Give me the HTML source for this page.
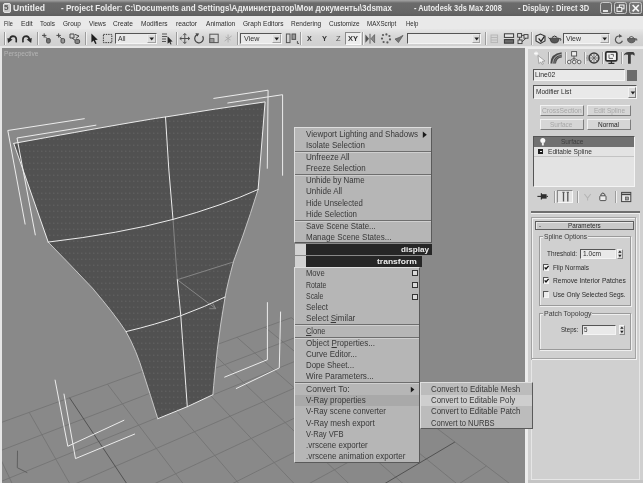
<!DOCTYPE html>
<html><head><meta charset="utf-8"><title>Untitled - Autodesk 3ds Max 2008</title><style>
html,body{margin:0;padding:0}
html{background:#d0d0d0}
body{filter:grayscale(1) blur(0.4px)}
body{width:643px;height:483px;overflow:hidden;position:relative;background:#d0d0d0;font-family:"Liberation Sans",sans-serif}
.a{position:absolute}
.t{position:absolute;white-space:nowrap;transform-origin:0 50%;display:inline-block}
.fld{position:absolute;background:#e9e9e9;border-top:1px solid #555;border-left:1px solid #555;border-right:1px solid #f4f4f4;border-bottom:1px solid #f4f4f4;box-sizing:border-box}
.btn{position:absolute;background:#d6d6d6;border-top:1px solid #f2f2f2;border-left:1px solid #f2f2f2;border-right:1px solid #7d7d7d;border-bottom:1px solid #7d7d7d;box-sizing:border-box}
.grp{position:absolute;border:1px solid #9a9a9a;box-shadow:1px 1px 0 #efefef, inset 1px 1px 0 #efefef;box-sizing:border-box}
.sep{position:absolute;width:1px;background:#9c9c9c;box-shadow:1px 0 0 #f0f0f0}
.msep{position:absolute;height:1px;background:#6e6e6e;box-shadow:0 1px 0 #cfcfcf}
</style></head><body>
<div class="a" style="left:0px;top:0px;width:643px;height:16.3px;background:linear-gradient(#a4a4a4 0,#8c8c8e 1.4px,#6b6b6d 3px,#656567 13px,#5c5c5e 16.3px)"></div>
<div class="a" style="left:2.5px;top:3px;width:8.0px;height:10px;background:#c9c9c9;border-radius:2px;border:1px solid #e6e6e6;box-sizing:border-box"></div>
<div class="a" style="left:599.6px;top:2px;width:12.4px;height:12.4px;background:#69696b;border:1px solid #c9c9c9;border-radius:2.5px;box-sizing:border-box"></div>
<div class="a" style="left:614.2px;top:2px;width:12.4px;height:12.4px;background:#69696b;border:1px solid #c9c9c9;border-radius:2.5px;box-sizing:border-box"></div>
<div class="a" style="left:629px;top:2px;width:13.4px;height:12.4px;background:#767678;border:1px solid #c9c9c9;border-radius:2.5px;box-sizing:border-box"></div>
<div class="a" style="left:0px;top:16.3px;width:643px;height:12.7px;background:#e9e9e9"></div>
<div class="a" style="left:0px;top:29px;width:643px;height:18.3px;background:linear-gradient(#e6e6e6,#d6d6d6 40%,#cfcfcf)"></div>
<div class="a" style="left:0px;top:46.2px;width:643px;height:1.5px;background:#e6e6e6"></div>
<div class="a" style="left:0px;top:47.7px;width:643px;height:0.7px;background:#a8a8a8"></div>
<div class="a" style="left:0px;top:48px;width:1.7px;height:435px;background:#e6e6e6"></div>
<svg class="a" style="left:1.7px;top:48.3px" width="523.6999999999999" height="434.7" viewBox="1.7 48.3 523.6999999999999 434.7">
<rect x="0" y="40" width="530" height="450" fill="#89898a"/>
<path d="M291.0,318.0 L754.5,670.1 M291.0,318.0 L-286.7,526.7 M264.6,327.5 L729.0,706.3 M309.7,332.2 L-287.9,561.5 M236.7,337.6 L700.7,746.5 M329.6,347.4 L-289.2,600.2 M207.1,348.3 L669.2,791.3 M351.0,363.6 L-290.7,643.8 M175.8,359.6 L633.8,841.7 M374.0,381.1 L-292.3,693.1 M142.5,371.7 L593.7,898.6 M398.8,399.9 L-294.2,749.3 M107.1,384.4 L548.1,963.6 M425.6,420.2 L-296.4,814.1 M28.9,412.7 L434.3,1125.3 M486.2,466.3 L-302.0,978.4 M-14.3,428.3 L362.2,1227.7 M520.6,492.5 L-305.6,1084.8 M-60.8,445.1 L276.1,1350.2 M558.4,521.2 L-309.9,1214.3 M-110.8,463.2 L171.4,1499.1 M600.0,552.8 L-315.4,1375.5 M-164.7,482.7 L41.2,1684.2 M646.0,587.7 L-322.3,1581.5 M-223.2,503.8 L-124.9,1920.3 M697.2,626.6 L-331.5,1854.2 M-286.7,526.7 L-344.3,2232.1 M754.5,670.1 L-344.3,2232.1" stroke="#747476" stroke-width="0.9" fill="none"/><path d="M69.3,398.1 L495.5,1038.3 M454.6,442.3 L-299.0,889.5" stroke="#515153" stroke-width="1" fill="none"/>
<defs><pattern id="dots" width="4" height="6" patternUnits="userSpaceOnUse"><rect width="4" height="6" fill="#515153"/><rect x="1" y="1" width="1" height="1" fill="#6c6c6e"/></pattern></defs>
<path d="M13.5,143.7 Q150,119 165.2,117.3 Q215,109 264.8,102.2 L257.8,189.8 Q250,215 242.6,236 Q236,254 233.3,261.6 Q227,285 224.8,297.3 Q220,325 217,350 Q214,378 212.6,395 L187,407 L157.5,419 Q150,395 143.5,375 Q136,350 125.7,331.9 Q114,314 92.1,288.4 Q70,265 47.9,242.4 Z" fill="url(#dots)"/>
<path d="M172.7,219.7 L177,280 M177,280 L234,262 M177,280 L215.5,309 M209,309 L215.5,309 L212,303" stroke="#858b93" stroke-width="0.9" fill="none"/>
<path d="M13.5,143.7 Q150,119 165.2,117.3 Q215,109 264.8,102.2 L257.8,189.8" stroke="#ececec" stroke-width="1" fill="none" stroke-linecap="round" stroke-linejoin="round"/>
<path d="M13.5,143.7 L47.9,242.4" stroke="#ececec" stroke-width="1" fill="none" stroke-linecap="round" stroke-linejoin="round"/>
<path d="M47.9,242.4 Q70,265 92.1,288.4 Q114,314 125.7,331.9 Q136,350 143.5,375 Q150,395 157.5,419" stroke="#cfcfcf" stroke-width="0.9" fill="none"/>
<path d="M157.5,419 L187,407 L212.6,395" stroke="#ececec" stroke-width="1" fill="none" stroke-linecap="round" stroke-linejoin="round"/>
<path d="M257.8,189.8 Q250,215 242.6,236 Q236,254 233.3,261.6 Q227,285 224.8,297.3 Q220,325 217,350 Q214,378 212.6,395" stroke="#cfcfcf" stroke-width="0.9" fill="none"/>
<path d="M47.9,242.4 Q120,234 172.7,219.7 Q222,206 257.8,189.8" stroke="#ececec" stroke-width="1" fill="none" stroke-linecap="round" stroke-linejoin="round"/>
<path d="M125.7,331.9 Q155,325 180.5,316 Q205,307 224.8,297.3" stroke="#ececec" stroke-width="1" fill="none" stroke-linecap="round" stroke-linejoin="round"/>
<path d="M165.2,117.3 Q168,170 172.7,219.7" stroke="#ececec" stroke-width="1" fill="none" stroke-linecap="round" stroke-linejoin="round"/>
<path d="M177,280 Q179,300 180.5,316 Q184,365 187,407" stroke="#ececec" stroke-width="1" fill="none" stroke-linecap="round" stroke-linejoin="round"/>
<path d="M84,119 L7.5,130.8 L24.8,224.4" stroke="#ececec" stroke-width="1" fill="none" stroke-linecap="round" stroke-linejoin="round"/>
<path d="M95.6,125.5 L16.7,138.3 L35,235.2" stroke="#ececec" stroke-width="1" fill="none" stroke-linecap="round" stroke-linejoin="round"/>
<path d="M213.5,98.7 L267.8,90.5 L267,168.6" stroke="#ececec" stroke-width="1" fill="none" stroke-linecap="round" stroke-linejoin="round"/>
<path d="M227.5,103.3 L282.3,95 L282.3,175.6" stroke="#ececec" stroke-width="1" fill="none" stroke-linecap="round" stroke-linejoin="round"/>
<path d="M267.1,302.9 L267.1,360 L224.4,377.4" stroke="#ececec" stroke-width="1" fill="none" stroke-linecap="round" stroke-linejoin="round"/>
<path d="M280.3,312.3 L279,368.2 L236,388.8" stroke="#ececec" stroke-width="1" fill="none" stroke-linecap="round" stroke-linejoin="round"/>
<path d="M54.8,380.4 L67.5,446.6 L123.6,420.6" stroke="#ececec" stroke-width="1" fill="none" stroke-linecap="round" stroke-linejoin="round"/>
<path d="M63.7,394.4 L75.2,458.9 L134.3,434.4" stroke="#ececec" stroke-width="1" fill="none" stroke-linecap="round" stroke-linejoin="round"/>
<path d="M17.2,451 L17,468 L27,473" stroke="#5a5a5c" stroke-width="0.9" fill="none"/>
</svg>
<div class="a" style="left:525.4px;top:48.3px;width:2.3px;height:434.7px;background:#ececec"></div>
<div class="a" style="left:527.7px;top:48.3px;width:115.3px;height:434.7px;background:#d0d0d0"></div>
<div class="a" style="left:525.4px;top:47.4px;width:117.6px;height:1.2px;background:#ececec"></div>
<div class="sep" style="left:547.5px;top:51.5px;width:1.0px;height:12.5px;"></div>
<div class="sep" style="left:564.5px;top:51.5px;width:1.0px;height:12.5px;"></div>
<div class="sep" style="left:584px;top:51.5px;width:1px;height:12.5px;"></div>
<div class="sep" style="left:602px;top:51.5px;width:1px;height:12.5px;"></div>
<div class="sep" style="left:620.5px;top:51.5px;width:1.0px;height:12.5px;"></div>
<svg class="a" style="left:530px;top:49px" width="113" height="17" viewBox="530 49 113 17">
<path d="M538,55.5 L545,61 L542.2,61.4 L543.4,64 L542,64.4 L540.8,62 L538.8,63.6 Z" fill="#f6f6f6" stroke="#8c8c8c" stroke-width="0.7"/>
<path d="M534.6,52 l3,3 M537.6,52 l-3,3 M536.1,51.4 v4.2 M534,53.5 h4.2" stroke="#fbfbfb" stroke-width="0.8"/>
<path d="M550.4,63.6 Q550.4,53.4 561.6,52.2 L561.8,57.4 Q556.4,57.8 556,63.6 Z" fill="#4a4a4c"/>
<path d="M552.6,63.6 Q553.2,55.2 561.6,54.4" stroke="#bdbdbd" stroke-width="0.9" fill="none"/>
<path d="M554.6,63.6 Q555,56.6 561.6,56.2" stroke="#8a8a8a" stroke-width="0.7" fill="none"/>
<rect x="571.6" y="51.6" width="5" height="4.4" fill="#ededed" stroke="#4e4e4e" stroke-width="0.9"/>
<path d="M574,56 V58 M574,58 L569.4,61 M574,58 L579,61 M574,58 V61" stroke="#555" stroke-width="0.8" fill="none"/>
<circle cx="569.2" cy="62" r="1.8" fill="#e6e6e6" stroke="#4e4e4e" stroke-width="0.8"/><circle cx="574.2" cy="62" r="1.8" fill="#e6e6e6" stroke="#4e4e4e" stroke-width="0.8"/><circle cx="579.2" cy="62" r="1.8" fill="#e6e6e6" stroke="#4e4e4e" stroke-width="0.8"/>
<circle cx="594" cy="58" r="4.9" fill="#d8d8d8" stroke="#3c3c3c" stroke-width="1.5"/>
<path d="M594,53.6 V62.4 M589.6,58 H598.4 M590.9,54.9 L597.1,61.1 M597.1,54.9 L590.9,61.1" stroke="#5a5a5a" stroke-width="0.7"/>
<path d="M586.6,56 h2 M586,58 h2 M586.6,60 h2" stroke="#6e6e6e" stroke-width="0.8"/>
<rect x="605.8" y="51.8" width="11" height="9" rx="1.4" fill="#f2f2f2" stroke="#2c2c2c" stroke-width="1.7"/>
<path d="M609,54.4 V58.4 H613 M610.6,54.4 H613.4 V56.6" stroke="#444" stroke-width="0.8" fill="none"/>
<path d="M608.4,63.4 H614.4 M611.4,61 V63" stroke="#2c2c2c" stroke-width="1.3"/>
<path d="M623.8,55.6 Q624.4,51.8 629,52 L633.4,52 Q635.2,53 634.6,55.8 L632.6,54.6 L630.8,54.8 L630.8,63.8 L628,63.8 L628,54.8 L625.4,54.6 Z" fill="#3e3e40"/>
</svg>
<div class="fld" style="left:533.3px;top:69.2px;width:91.4px;height:11.4px;"></div>
<div class="a" style="left:627px;top:69.6px;width:9.6px;height:11.0px;background:#6c6c6e"></div>
<div class="fld" style="left:533.3px;top:85.4px;width:103.5px;height:13.6px;"></div>
<div class="btn" style="left:628.2px;top:87px;width:7.8px;height:10.6px;background:#dadada"></div>
<svg class="a" style="left:629.5px;top:90.5px" width="6" height="4" viewBox="0 0 6 4"><path d="M0.6,0.6 L5.2,0.6 L2.9,3.4 Z" fill="#222"/></svg>
<div class="btn" style="left:539.8px;top:104.7px;width:43.9px;height:11.3px;"></div>
<div class="btn" style="left:539.8px;top:118.7px;width:43.9px;height:11.5px;"></div>
<div class="btn" style="left:586.8px;top:104.7px;width:44.1px;height:11.3px;"></div>
<div class="btn" style="left:586.8px;top:118.7px;width:44.1px;height:11.5px;"></div>
<div class="fld" style="left:533.3px;top:136.1px;width:101.9px;height:50.6px;background:#e3e3e5"></div>
<div class="a" style="left:534.3px;top:137px;width:100.1px;height:9.6px;background:#707072"></div>
<div class="a" style="left:534.3px;top:156.3px;width:100.1px;height:0.8px;background:#c3c3c3"></div>
<svg class="a" style="left:538px;top:137px" width="10" height="10" viewBox="0 0 10 10"><circle cx="4.8" cy="3.6" r="2.5" fill="#f6f6f6"/><rect x="3.9" y="5.5" width="1.9" height="3" fill="#efefef"/></svg>
<div class="a" style="left:538.4px;top:148.6px;width:5.0px;height:5.0px;background:#1e1e1e"></div>
<div class="a" style="left:539.6px;top:150.7px;width:2.6px;height:0.9px;background:#eee"></div>
<div class="a" style="left:556.6px;top:189.6px;width:16.4px;height:13.8px;background:#e4e4e4;border:1px solid #f7f7f7;border-top-color:#8a8a8a;border-left-color:#8a8a8a;box-sizing:border-box"></div>
<div class="sep" style="left:554.4px;top:190.5px;width:1.0px;height:12.5px;"></div>
<div class="sep" style="left:577px;top:190.5px;width:1px;height:12.5px;"></div>
<div class="sep" style="left:614.5px;top:190.5px;width:1.0px;height:12.5px;"></div>
<svg class="a" style="left:534px;top:188px" width="104" height="17" viewBox="534 188 104 17">
<g transform="translate(0,-0.6)">
<path d="M537.4,197 H541.4" stroke="#2e2e2e" stroke-width="1.1"/><path d="M541.4,193.8 V200.2" stroke="#2e2e2e" stroke-width="1.2"/><rect x="542" y="194.8" width="4.6" height="4.4" fill="#2e2e2e"/><path d="M546.6,197 H548" stroke="#2e2e2e" stroke-width="1"/>
<path d="M563.5,192.8 V202 M567.8,192.8 V202" stroke="#555" stroke-width="1.3"/>
<path d="M562.4,192.9 H564.6 M566.7,192.9 H568.9" stroke="#555" stroke-width="1"/>
<path d="M584.4,194.6 L587.6,198.6 L590.8,194.6 M587.6,198.6 V201" stroke="#b4b4b4" stroke-width="1.1" fill="none"/>
<path d="M600.9,196.4 V195 Q602.9,192 604.9,195 V196.4" stroke="#444" stroke-width="1" fill="none"/>
<rect x="599.8" y="196.4" width="6.2" height="4.8" rx="0.8" fill="#ececec" stroke="#444" stroke-width="0.9"/>
<rect x="621.6" y="193" width="9.2" height="9.2" fill="#e8e8e8" stroke="#444" stroke-width="1"/>
<path d="M621.6,195 H630.8" stroke="#444" stroke-width="1.5"/>
<rect x="625.4" y="197.6" width="3.2" height="3" fill="#999" stroke="#444" stroke-width="0.6"/>
</g>
</svg>
<div class="a" style="left:531.4px;top:211.3px;width:108.4px;height:1.5px;background:#6f6f6f"></div>
<div class="a" style="left:531.4px;top:212.8px;width:108.4px;height:0.8px;background:#f0f0f0"></div>
<div class="a" style="left:531.4px;top:217px;width:104.6px;height:141.6px;border:1px solid #a3a3a3;box-shadow:inset 1px 1px 0 #f1f1f1, 1px 1px 0 #f1f1f1;box-sizing:border-box"></div>
<div class="a" style="left:534.6px;top:220.6px;width:99.0px;height:9.3px;background:#c9c9c9;border:1px solid #5e5e5e;box-sizing:border-box;box-shadow:inset 1px 1px 0 #e8e8e8"></div>
<div class="grp" style="left:538.9px;top:236.4px;width:92.6px;height:70.1px;"></div>
<div class="grp" style="left:538.9px;top:313.2px;width:92.6px;height:36.4px;"></div>
<div class="a" style="left:542.5px;top:233px;width:45.0px;height:8px;background:#d0d0d0"></div>
<div class="a" style="left:542.5px;top:310px;width:49.5px;height:8px;background:#d0d0d0"></div>
<div class="fld" style="left:580px;top:248.6px;width:35.6px;height:10.1px;"></div>
<div class="fld" style="left:581.8px;top:324.6px;width:34.7px;height:10.1px;"></div>
<div class="a" style="left:617.2px;top:249px;width:6.0px;height:9.6px;background:#dcdcdc;border:1px solid #f4f4f4;border-right-color:#888;border-bottom-color:#888;box-sizing:border-box"></div>
<svg class="a" style="left:617.2px;top:249px" width="6" height="9.6" viewBox="0 0 6 9.6"><path d="M1.2,3.8 L2.9,1.4 L4.6,3.8 Z M1.2,5.8 L2.9,8.2 L4.6,5.8 Z" fill="#222"/></svg>
<div class="a" style="left:619px;top:325px;width:6px;height:9.6px;background:#dcdcdc;border:1px solid #f4f4f4;border-right-color:#888;border-bottom-color:#888;box-sizing:border-box"></div>
<svg class="a" style="left:619px;top:325px" width="6" height="9.6" viewBox="0 0 6 9.6"><path d="M1.2,3.8 L2.9,1.4 L4.6,3.8 Z M1.2,5.8 L2.9,8.2 L4.6,5.8 Z" fill="#222"/></svg>
<div class="fld" style="left:542.6px;top:264.1px;width:6.8px;height:7.0px;background:#f4f4f4"></div>
<svg class="a" style="left:542.6px;top:264.1px" width="7" height="7" viewBox="0 0 7 7"><path d="M1.7,3.3 L3,5 L5.6,1.8" stroke="#111" stroke-width="1.3" fill="none"/></svg>
<div class="fld" style="left:542.6px;top:277.2px;width:6.8px;height:7.0px;background:#f4f4f4"></div>
<svg class="a" style="left:542.6px;top:277.2px" width="7" height="7" viewBox="0 0 7 7"><path d="M1.7,3.3 L3,5 L5.6,1.8" stroke="#111" stroke-width="1.3" fill="none"/></svg>
<div class="fld" style="left:542.6px;top:290.8px;width:6.8px;height:7.0px;background:#ececec"></div>
<div class="a" style="left:530.6px;top:359px;width:0.8px;height:120.8px;background:#b0b0b0"></div>
<div class="a" style="left:531.4px;top:359.6px;width:108.6px;height:120.2px;border-left:1px solid #e6e6e6;border-bottom:1px solid #e6e6e6;border-right:1px solid #e6e6e6;box-sizing:border-box"></div>
<div class="a" style="left:639px;top:214px;width:1px;height:146px;background:#e6e6e6"></div>
<div class="a" style="left:527.7px;top:479.8px;width:115.3px;height:3.2px;background:#c4c4c4"></div>
<div class="a" style="left:294px;top:127.3px;width:138.2px;height:116.1px;background:#b6b6b6;border-top:1px solid #dedede;border-left:1px solid #dedede;border-right:1px solid #5a5a5a;border-bottom:1px solid #5a5a5a;box-sizing:border-box;"></div>
<div class="a" style="left:294px;top:267px;width:125.8px;height:196.2px;background:#b6b6b6;border-top:1px solid #dedede;border-left:1px solid #dedede;border-right:1px solid #5a5a5a;border-bottom:1px solid #5a5a5a;box-sizing:border-box;"></div>
<div class="a" style="left:294.8px;top:244px;width:10.8px;height:11px;background:#d2d2d2"></div>
<div class="a" style="left:294.8px;top:256.2px;width:10.8px;height:10.4px;background:#d2d2d2"></div>
<div class="a" style="left:306px;top:243.6px;width:126.2px;height:11.4px;background:#262626"></div>
<div class="a" style="left:306px;top:256px;width:116px;height:10.8px;background:#262626"></div>
<div class="msep" style="left:295px;top:150.6px;width:136.2px;height:1.0px;"></div>
<div class="msep" style="left:295px;top:174.3px;width:136.2px;height:1.0px;"></div>
<div class="msep" style="left:295px;top:220.1px;width:136.2px;height:1.0px;"></div>
<div class="msep" style="left:295px;top:324.2px;width:123.8px;height:1.0px;"></div>
<div class="msep" style="left:295px;top:336.6px;width:123.8px;height:1.0px;"></div>
<div class="msep" style="left:295px;top:382px;width:123.8px;height:1px;"></div>
<div class="a" style="left:295px;top:394.8px;width:123.8px;height:11.0px;background:#a9a9a9"></div>
<div class="a" style="left:419.6px;top:382px;width:113.2px;height:46.8px;background:#bcbcbc;border-top:1px solid #dedede;border-left:1px solid #dedede;border-right:1px solid #5a5a5a;border-bottom:1px solid #5a5a5a;box-sizing:border-box;"></div>
<div class="a" style="left:420.6px;top:394.8px;width:111.2px;height:11.0px;background:#cecece"></div>
<svg class="a" style="left:421.5px;top:130.5px" width="6" height="8" viewBox="0 0 6 8"><path d="M0.8,0.6 L4.8,3.8 L0.8,7 Z" fill="#1a1a1a"/></svg>
<svg class="a" style="left:409.5px;top:385.5px" width="6" height="8" viewBox="0 0 6 8"><path d="M0.8,0.8 L4.4,3.6 L0.8,6.4 Z" fill="#1a1a1a"/></svg>
<div class="a" style="left:411.6px;top:270.4px;width:6.2px;height:5.8px;background:#d9d9d9;border:1px solid #333;border-top-width:1.6px;box-sizing:border-box"></div>
<div class="a" style="left:411.6px;top:282.2px;width:6.2px;height:5.8px;background:#d9d9d9;border:1px solid #333;border-top-width:1.6px;box-sizing:border-box"></div>
<div class="a" style="left:411.6px;top:293.8px;width:6.2px;height:5.8px;background:#d9d9d9;border:1px solid #333;border-top-width:1.6px;box-sizing:border-box"></div>
<svg class="a" style="left:598px;top:1px" width="45" height="15" viewBox="598 1 45 15">
<path d="M603,11 H608" stroke="#f2f2f2" stroke-width="1.8"/>
<rect x="619.4" y="5" width="4.6" height="3.8" fill="none" stroke="#f2f2f2" stroke-width="1.1"/>
<rect x="617" y="7.4" width="4.8" height="4" fill="#69696b" stroke="#f2f2f2" stroke-width="1.1"/>
<path d="M632.6,5 L638.8,11.4 M638.8,5 L632.6,11.4" stroke="#f6f6f6" stroke-width="1.6"/>
</svg>
<div class="a" style="left:3.6px;top:32px;width:0.8px;height:13px;background:#9a9a9a;box-shadow:1px 0 0 #f4f4f4"></div>
<div class="sep" style="left:37px;top:32px;width:1px;height:13px;"></div>
<div class="sep" style="left:85px;top:32px;width:1px;height:13px;"></div>
<div class="sep" style="left:176px;top:32px;width:1px;height:13px;"></div>
<div class="sep" style="left:237px;top:32px;width:1px;height:13px;"></div>
<div class="sep" style="left:299.5px;top:32px;width:1.0px;height:13px;"></div>
<div class="sep" style="left:362px;top:32px;width:1px;height:13px;"></div>
<div class="sep" style="left:485px;top:32px;width:1px;height:13px;"></div>
<div class="sep" style="left:530.5px;top:32px;width:1.0px;height:13px;"></div>
<div class="fld" style="left:115px;top:33px;width:42px;height:11.4px;"></div>
<div class="btn" style="left:147.4px;top:34.2px;width:8.6px;height:9.2px;background:#dedede;border-color:#ececec #a0a0a0 #a0a0a0 #ececec"></div>
<svg class="a" style="left:149.2px;top:37.4px" width="6" height="4" viewBox="0 0 6 4"><path d="M0.4,0.5 L5,0.5 L2.7,3.4 Z" fill="#222"/></svg>
<div class="fld" style="left:240.4px;top:33px;width:41.6px;height:11.4px;"></div>
<div class="btn" style="left:272.4px;top:34.2px;width:8.6px;height:9.2px;background:#dedede;border-color:#ececec #a0a0a0 #a0a0a0 #ececec"></div>
<svg class="a" style="left:274.2px;top:37.4px" width="6" height="4" viewBox="0 0 6 4"><path d="M0.4,0.5 L5,0.5 L2.7,3.4 Z" fill="#222"/></svg>
<div class="fld" style="left:406.8px;top:33px;width:74.6px;height:11.4px;"></div>
<div class="btn" style="left:471.79999999999995px;top:34.2px;width:8.6px;height:9.2px;background:#dedede;border-color:#ececec #a0a0a0 #a0a0a0 #ececec"></div>
<svg class="a" style="left:473.59999999999997px;top:37.4px" width="6" height="4" viewBox="0 0 6 4"><path d="M0.4,0.5 L5,0.5 L2.7,3.4 Z" fill="#222"/></svg>
<div class="fld" style="left:562.5px;top:33px;width:47.5px;height:11.4px;"></div>
<div class="btn" style="left:600.4px;top:34.2px;width:8.6px;height:9.2px;background:#dedede;border-color:#ececec #a0a0a0 #a0a0a0 #ececec"></div>
<svg class="a" style="left:602.2px;top:37.4px" width="6" height="4" viewBox="0 0 6 4"><path d="M0.4,0.5 L5,0.5 L2.7,3.4 Z" fill="#222"/></svg>
<div class="a" style="left:345px;top:32.4px;width:15.6px;height:12.6px;background:#ececec;border:1px solid #f8f8f8;border-top-color:#8a8a8a;border-left-color:#8a8a8a;box-sizing:border-box"></div>
<svg class="a" style="left:0px;top:29px" width="643" height="18" viewBox="0 29 643 18">
<g fill="none" stroke="#2a2a2a" stroke-width="1.7">
<path d="M16.2,42.4 Q17.2,36.2 13,36.2 Q10.4,36.4 9.8,39.4"/><path d="M23,42.4 Q22,36.2 26.2,36.2 Q28.8,36.4 29.4,39.4"/>
</g>
<path d="M7.4,38 L12.6,39.6 L8,43 Z M31.8,38 L26.6,39.6 L31.2,43 Z" fill="#2a2a2a"/>
<g fill="none" stroke="#4a4a4a" stroke-width="1">
<path d="M42,35.4 H46.4 M44.2,33.4 V37.6 M45,36.4 L47.4,39"/><rect x="46.6" y="38.6" width="3.6" height="4.4" rx="1.2" fill="#777"/>
<path d="M56.4,35.4 H60.8 M58.6,33.4 V37.6 M59.4,36.4 L61.8,39"/><rect x="61" y="38.6" width="3.6" height="4.4" rx="1.2" fill="#999"/>
<path d="M70,34 H74 V38 H70 Z M72,38 L75.6,40.6 M75,34.4 L79,36 L76,38.4"/><rect x="75" y="39.6" width="4.6" height="3.8" rx="1.2" fill="#888"/>
</g>
<path d="M91.4,33.4 L91.4,42.6 L93.6,40.6 L95.2,44 L96.6,43.4 L95,40 L97.8,39.8 Z" fill="#1e1e1e"/>
<rect x="103.4" y="34.4" width="8.4" height="8.2" fill="none" stroke="#333" stroke-width="1" stroke-dasharray="1.4 1"/>
<g fill="none" stroke="#555" stroke-width="1">
<path d="M162,34 H167 M162,36.5 H167 M162,39 H166 M162,41.5 H166"/>
</g>
<path d="M167.6,36.2 L167.6,43.8 L169.4,42.2 L170.6,44.6 L171.6,44.2 L170.4,41.8 L172.6,41.6 Z" fill="#2a2a2a"/>
<g transform="translate(-3.2,0)"><path d="M188,33.8 V43.2 M183.2,38.5 H192.8 M186.4,35.2 L188,33.4 L189.6,35.2 M186.4,41.8 L188,43.6 L189.6,41.8 M184.8,37 L183,38.5 L184.8,40 M191.2,37 L193,38.5 L191.2,40" stroke="#505050" stroke-width="1" fill="none"/></g>
<g transform="translate(-4.6,0)"><path d="M207.2,36.2 A4.3,4.3 0 1 1 202,34.6" stroke="#444" stroke-width="1.2" fill="none"/><path d="M200,33.2 L203.8,33.4 L202,36.6 Z" fill="#444"/></g>
<g transform="translate(-4,0)"><rect x="213.8" y="34.2" width="8.4" height="8.4" fill="none" stroke="#555" stroke-width="1"/><rect x="213.8" y="38.6" width="4.2" height="4" fill="#9a9a9a" stroke="#555" stroke-width="0.8"/></g>
<g transform="translate(-3.4,0)"><path d="M228,41 L235,36 M231.5,34.5 V42.5 M229,37 L234,40" stroke="#ababab" stroke-width="0.9" fill="none"/></g>
<g stroke="#555" stroke-width="1" fill="none"><rect x="286.4" y="34" width="3.6" height="8.6"/><rect x="292" y="34" width="3.6" height="5.4" fill="#999"/><path d="M297.4,41 V43.4 H299"/></g>
<path d="M370,33.8 V43.6" stroke="#555" stroke-width="0.9"/><path d="M365.4,34.6 L369,38.7 L365.4,42.8 Z" fill="#555"/><path d="M374.6,34.6 L371,38.7 L374.6,42.8 Z" fill="#8a8a8a" stroke="#555" stroke-width="0.7"/>
<g fill="#5a5a5a"><circle cx="383" cy="35" r="1.1"/><circle cx="386.4" cy="34.4" r="1.1"/><circle cx="389.4" cy="36" r="1.1"/><circle cx="382" cy="38.6" r="1.1"/><circle cx="390" cy="39.4" r="1.1"/><circle cx="383.6" cy="42" r="1.1"/><circle cx="387.4" cy="42.4" r="1.1"/></g>
<path d="M395,39 L398.4,42.6 L403,35.4 L399,37.6 Z" fill="#777" stroke="#555" stroke-width="0.7"/>
<g stroke="#b4b4b4" stroke-width="0.9" fill="none"><rect x="491" y="35" width="6.6" height="7.6"/><path d="M491,37.5 H497.6 M491,40 H497.6"/></g>
<g stroke="#3a3a3a" stroke-width="1" fill="#e6e6e6"><rect x="504.4" y="33.8" width="9.2" height="3.6"/><rect x="504.4" y="39.6" width="9.2" height="3.6" fill="#6a6a6a"/></g>
<g stroke="#3a3a3a" stroke-width="0.9" fill="#dcdcdc"><rect x="517.6" y="33.6" width="4" height="3.6"/><rect x="524" y="34.6" width="4" height="3.6"/><rect x="518" y="40" width="4" height="3.6"/><path d="M519.6,37.2 V40 M521.6,35.4 H524 M522,41.8 L526,38.2" fill="none"/></g>
<path d="M536,36 L540.4,34 L545,36 V41 L540.4,43.4 L536,41 Z" fill="#dedede" stroke="#333" stroke-width="1.1"/><path d="M538.6,38.4 L541,41.4 L544.4,36.4" stroke="#222" stroke-width="1.2" fill="none"/>
<path d="M550.4,38.2 Q549.6,42.8 554.6,43 Q559.4,42.8 558.8,38.2 Z" fill="#555" stroke="#333" stroke-width="0.8"/><path d="M552,37.4 Q554.6,34.6 557.2,37.4 M558.8,39 Q561.4,37.6 560.6,40.6 M550.4,39.4 L548.4,37.6" stroke="#333" stroke-width="1" fill="none"/>
<path d="M620.6,36.4 A3.6,3.6 0 1 0 622.4,40.8" stroke="#555" stroke-width="1.2" fill="none"/><path d="M619,34 L622.4,36.2 L619,37.8 Z" fill="#555"/>
<path d="M627.6,38.6 Q627.2,42.6 631.4,42.8 Q635.6,42.6 635.2,38.6 Z" fill="#666" stroke="#444" stroke-width="0.8"/><path d="M629,37.6 Q631.4,35.4 633.8,37.6 M635.2,39 Q637.4,38 636.8,40.6" stroke="#444" stroke-width="0.9" fill="none"/>
</svg>
<span class="t" style="left:3.5px;top:49.45px;font-size:7px;line-height:9.1px;font-weight:normal;color:#b4b4b4;transform:scaleX(0.9432);">Perspective</span>
<span class="t" style="left:535.3px;top:70.06px;font-size:7.6px;line-height:9.88px;font-weight:normal;color:#2a2a2a;transform:scaleX(0.8942);">Line02</span>
<span class="t" style="left:535.8px;top:87.36px;font-size:7.6px;line-height:9.88px;font-weight:normal;color:#2a2a2a;transform:scaleX(0.8598);">Modifier List</span>
<span class="t" style="left:541.8px;top:105.56px;font-size:7.6px;line-height:9.88px;font-weight:normal;color:#a7a7a7;transform:scaleX(0.8811);">CrossSection</span>
<span class="t" style="left:593.5px;top:105.56px;font-size:7.6px;line-height:9.88px;font-weight:normal;color:#a7a7a7;transform:scaleX(0.8537);">Edit Spline</span>
<span class="t" style="left:550px;top:119.66px;font-size:7.6px;line-height:9.88px;font-weight:normal;color:#a7a7a7;transform:scaleX(0.8597);">Surface</span>
<span class="t" style="left:598px;top:119.66px;font-size:7.6px;line-height:9.88px;font-weight:normal;color:#1c1c1c;transform:scaleX(0.8577);">Normal</span>
<span class="t" style="left:561px;top:136.96px;font-size:7.6px;line-height:9.88px;font-weight:normal;color:#3c3c3c;transform:scaleX(0.8597);">Surface</span>
<span class="t" style="left:548.2px;top:146.56px;font-size:7.6px;line-height:9.88px;font-weight:normal;color:#2f2f2f;transform:scaleX(0.8644);">Editable Spline</span>
<span class="t" style="left:539px;top:221.06px;font-size:7.6px;line-height:9.88px;font-weight:normal;color:#2a2a2a;transform:scaleX(0.7901);">-</span>
<span class="t" style="left:567.8px;top:221.06px;font-size:7.6px;line-height:9.88px;font-weight:normal;color:#2a2a2a;transform:scaleX(0.8331);">Parameters</span>
<span class="t" style="left:543.5px;top:232.06px;font-size:7.6px;line-height:9.88px;font-weight:normal;color:#3a3a3a;transform:scaleX(0.8706);">Spline Options</span>
<span class="t" style="left:546.9px;top:248.66px;font-size:7.6px;line-height:9.88px;font-weight:normal;color:#2a2a2a;transform:scaleX(0.8387);">Threshold:</span>
<span class="t" style="left:582.5px;top:248.86px;font-size:7.6px;line-height:9.88px;font-weight:normal;color:#2a2a2a;transform:scaleX(0.8701);">1.0cm</span>
<span class="t" style="left:553.4px;top:263.06px;font-size:7.6px;line-height:9.88px;font-weight:normal;color:#2a2a2a;transform:scaleX(0.8422);">Flip Normals</span>
<span class="t" style="left:553.4px;top:276.06px;font-size:7.6px;line-height:9.88px;font-weight:normal;color:#2a2a2a;transform:scaleX(0.8710);">Remove Interior Patches</span>
<span class="t" style="left:553.4px;top:289.56px;font-size:7.6px;line-height:9.88px;font-weight:normal;color:#2a2a2a;transform:scaleX(0.8600);">Use Only Selected Segs.</span>
<span class="t" style="left:543.5px;top:308.86px;font-size:7.6px;line-height:9.88px;font-weight:normal;color:#3a3a3a;transform:scaleX(0.9170);">Patch Topology</span>
<span class="t" style="left:561.3px;top:324.66px;font-size:7.6px;line-height:9.88px;font-weight:normal;color:#2a2a2a;transform:scaleX(0.8035);">Steps:</span>
<span class="t" style="left:584px;top:324.86px;font-size:7.6px;line-height:9.88px;font-weight:normal;color:#2a2a2a;transform:scaleX(0.8266);">5</span>
<span class="t" style="left:306.1px;top:129.77px;font-size:8.2px;line-height:10.66px;font-weight:normal;color:#383838;transform:scaleX(0.9776);">Viewport Lighting and Shadows</span>
<span class="t" style="left:306.1px;top:140.97px;font-size:8.2px;line-height:10.66px;font-weight:normal;color:#383838;transform:scaleX(0.9818);">Isolate Selection</span>
<span class="t" style="left:306.1px;top:152.87px;font-size:8.2px;line-height:10.66px;font-weight:normal;color:#383838;transform:scaleX(0.9874);">Unfreeze All</span>
<span class="t" style="left:306.1px;top:164.07px;font-size:8.2px;line-height:10.66px;font-weight:normal;color:#383838;transform:scaleX(0.9715);">Freeze Selection</span>
<span class="t" style="left:306.1px;top:175.77px;font-size:8.2px;line-height:10.66px;font-weight:normal;color:#383838;transform:scaleX(0.9593);">Unhide by Name</span>
<span class="t" style="left:306.1px;top:187.47px;font-size:8.2px;line-height:10.66px;font-weight:normal;color:#383838;transform:scaleX(0.9790);">Unhide All</span>
<span class="t" style="left:306.1px;top:198.57px;font-size:8.2px;line-height:10.66px;font-weight:normal;color:#383838;transform:scaleX(0.9454);">Hide Unselected</span>
<span class="t" style="left:306.1px;top:209.97px;font-size:8.2px;line-height:10.66px;font-weight:normal;color:#383838;transform:scaleX(0.9660);">Hide Selection</span>
<span class="t" style="left:306.1px;top:222.37px;font-size:8.2px;line-height:10.66px;font-weight:normal;color:#383838;transform:scaleX(0.9630);">Save Scene State...</span>
<span class="t" style="left:306.1px;top:232.87px;font-size:8.2px;line-height:10.66px;font-weight:normal;color:#383838;transform:scaleX(0.9772);">Manage Scene States...</span>
<span class="t" style="left:401.4px;top:244.86px;font-size:7.6px;line-height:9.88px;font-weight:bold;color:#ededed;transform:scaleX(1.0660);">display</span>
<span class="t" style="left:377px;top:257.06px;font-size:7.6px;line-height:9.88px;font-weight:bold;color:#ededed;transform:scaleX(1.1226);">transform</span>
<span class="t" style="left:306.1px;top:268.77px;font-size:8.2px;line-height:10.66px;font-weight:normal;color:#383838;transform:scaleX(0.9335);">Move</span>
<span class="t" style="left:306.1px;top:280.57px;font-size:8.2px;line-height:10.66px;font-weight:normal;color:#383838;transform:scaleX(0.8456);">Rotate</span>
<span class="t" style="left:306.1px;top:292.17px;font-size:8.2px;line-height:10.66px;font-weight:normal;color:#383838;transform:scaleX(0.8494);">Scale</span>
<span class="t" style="left:306.1px;top:303.07px;font-size:8.2px;line-height:10.66px;font-weight:normal;color:#383838;transform:scaleX(0.9620);">Select</span>
<span class="t" style="left:306.1px;top:314.27px;font-size:8.2px;line-height:10.66px;font-weight:normal;color:#383838;transform:scaleX(0.9848);">Select <u>S</u>imilar</span>
<span class="t" style="left:306.1px;top:326.67px;font-size:8.2px;line-height:10.66px;font-weight:normal;color:#383838;transform:scaleX(0.9063);"><u>C</u>lone</span>
<span class="t" style="left:306.1px;top:338.57px;font-size:8.2px;line-height:10.66px;font-weight:normal;color:#383838;transform:scaleX(0.9828);">Object <u>P</u>roperties...</span>
<span class="t" style="left:306.1px;top:349.87px;font-size:8.2px;line-height:10.66px;font-weight:normal;color:#383838;transform:scaleX(0.9831);">Curve Editor...</span>
<span class="t" style="left:306.1px;top:361.37px;font-size:8.2px;line-height:10.66px;font-weight:normal;color:#383838;transform:scaleX(0.9605);">Dope Sheet...</span>
<span class="t" style="left:306.1px;top:372.37px;font-size:8.2px;line-height:10.66px;font-weight:normal;color:#383838;transform:scaleX(0.9919);">Wire Parameters...</span>
<span class="t" style="left:306.1px;top:384.57px;font-size:8.2px;line-height:10.66px;font-weight:normal;color:#383838;transform:scaleX(1.0451);">Convert To:</span>
<span class="t" style="left:306.1px;top:395.87px;font-size:8.2px;line-height:10.66px;font-weight:normal;color:#383838;transform:scaleX(0.9806);">V-Ray properties</span>
<span class="t" style="left:306.1px;top:407.17px;font-size:8.2px;line-height:10.66px;font-weight:normal;color:#383838;transform:scaleX(0.9659);">V-Ray scene converter</span>
<span class="t" style="left:306.1px;top:418.77px;font-size:8.2px;line-height:10.66px;font-weight:normal;color:#383838;transform:scaleX(0.9867);">V-Ray mesh export</span>
<span class="t" style="left:306.1px;top:430.17px;font-size:8.2px;line-height:10.66px;font-weight:normal;color:#383838;transform:scaleX(0.9259);">V-Ray VFB</span>
<span class="t" style="left:306.1px;top:441.27px;font-size:8.2px;line-height:10.66px;font-weight:normal;color:#383838;transform:scaleX(0.9768);">.vrscene exporter</span>
<span class="t" style="left:306.1px;top:452.47px;font-size:8.2px;line-height:10.66px;font-weight:normal;color:#383838;transform:scaleX(0.9839);">.vrscene animation exporter</span>
<span class="t" style="left:431.4px;top:384.57px;font-size:8.2px;line-height:10.66px;font-weight:normal;color:#383838;transform:scaleX(0.9713);">Convert to Editable Mesh</span>
<span class="t" style="left:431.4px;top:395.87px;font-size:8.2px;line-height:10.66px;font-weight:normal;color:#383838;transform:scaleX(0.9574);">Convert to Editable Poly</span>
<span class="t" style="left:431.4px;top:407.17px;font-size:8.2px;line-height:10.66px;font-weight:normal;color:#383838;transform:scaleX(0.9617);">Convert to Editable Patch</span>
<span class="t" style="left:431.4px;top:418.77px;font-size:8.2px;line-height:10.66px;font-weight:normal;color:#383838;transform:scaleX(0.9255);">Convert to NURBS</span>
<span class="t" style="left:13.2px;top:3.25px;font-size:9px;line-height:11.7px;font-weight:bold;color:#ececec;transform:scaleX(0.9522);">Untitled</span>
<span class="t" style="left:61.3px;top:3.25px;font-size:9px;line-height:11.7px;font-weight:bold;color:#ececec;transform:scaleX(0.8909);">- Project Folder: C:\Documents and Settings\Администратор\Мои документы\3dsmax</span>
<span class="t" style="left:414.2px;top:3.25px;font-size:9px;line-height:11.7px;font-weight:bold;color:#ececec;transform:scaleX(0.8227);">- Autodesk 3ds Max 2008</span>
<span class="t" style="left:518.3px;top:3.25px;font-size:9px;line-height:11.7px;font-weight:bold;color:#ececec;transform:scaleX(0.8373);">- Display : Direct 3D</span>
<span class="t" style="left:4.3px;top:3.0px;font-size:8px;line-height:10.4px;font-weight:bold;color:#555;transform:scaleX(1.0105);">5</span>
<span class="t" style="left:3.5px;top:18.52px;font-size:7.2px;line-height:9.36px;font-weight:normal;color:#2c2c2c;transform:scaleX(0.7677);">File</span>
<span class="t" style="left:20.6px;top:18.52px;font-size:7.2px;line-height:9.36px;font-weight:normal;color:#2c2c2c;transform:scaleX(0.9443);">Edit</span>
<span class="t" style="left:40.3px;top:18.52px;font-size:7.2px;line-height:9.36px;font-weight:normal;color:#2c2c2c;transform:scaleX(0.8879);">Tools</span>
<span class="t" style="left:62.9px;top:18.52px;font-size:7.2px;line-height:9.36px;font-weight:normal;color:#2c2c2c;transform:scaleX(0.8957);">Group</span>
<span class="t" style="left:88.8px;top:18.52px;font-size:7.2px;line-height:9.36px;font-weight:normal;color:#2c2c2c;transform:scaleX(0.8873);">Views</span>
<span class="t" style="left:113.2px;top:18.52px;font-size:7.2px;line-height:9.36px;font-weight:normal;color:#2c2c2c;transform:scaleX(0.9176);">Create</span>
<span class="t" style="left:141.4px;top:18.52px;font-size:7.2px;line-height:9.36px;font-weight:normal;color:#2c2c2c;transform:scaleX(0.9118);">Modifiers</span>
<span class="t" style="left:176.4px;top:18.52px;font-size:7.2px;line-height:9.36px;font-weight:normal;color:#2c2c2c;transform:scaleX(0.9430);">reactor</span>
<span class="t" style="left:205.6px;top:18.52px;font-size:7.2px;line-height:9.36px;font-weight:normal;color:#2c2c2c;transform:scaleX(0.9134);">Animation</span>
<span class="t" style="left:242.9px;top:18.52px;font-size:7.2px;line-height:9.36px;font-weight:normal;color:#2c2c2c;transform:scaleX(0.9133);">Graph Editors</span>
<span class="t" style="left:291.1px;top:18.52px;font-size:7.2px;line-height:9.36px;font-weight:normal;color:#2c2c2c;transform:scaleX(0.9104);">Rendering</span>
<span class="t" style="left:329.1px;top:18.52px;font-size:7.2px;line-height:9.36px;font-weight:normal;color:#2c2c2c;transform:scaleX(0.8983);">Customize</span>
<span class="t" style="left:367.3px;top:18.52px;font-size:7.2px;line-height:9.36px;font-weight:normal;color:#2c2c2c;transform:scaleX(0.8630);">MAXScript</span>
<span class="t" style="left:405.7px;top:18.52px;font-size:7.2px;line-height:9.36px;font-weight:normal;color:#2c2c2c;transform:scaleX(0.8380);">Help</span>
<span class="t" style="left:118px;top:34.12px;font-size:7.2px;line-height:9.36px;font-weight:normal;color:#333;transform:scaleX(0.9500);">All</span>
<span class="t" style="left:243.6px;top:34.12px;font-size:7.2px;line-height:9.36px;font-weight:normal;color:#333;transform:scaleX(0.9966);">View</span>
<span class="t" style="left:565.5px;top:34.12px;font-size:7.2px;line-height:9.36px;font-weight:normal;color:#333;transform:scaleX(0.9707);">View</span>
<span class="t" style="left:306.6px;top:33.99px;font-size:7.4px;line-height:9.62px;font-weight:bold;color:#333;transform:scaleX(0.9722);">X</span>
<span class="t" style="left:321.8px;top:33.99px;font-size:7.4px;line-height:9.62px;font-weight:bold;color:#333;transform:scaleX(1.0127);">Y</span>
<span class="t" style="left:335.6px;top:33.99px;font-size:7.4px;line-height:9.62px;font-weight:normal;color:#555;transform:scaleX(1.0187);">Z</span>
<span class="t" style="left:347.6px;top:33.99px;font-size:7.4px;line-height:9.62px;font-weight:bold;color:#333;transform:scaleX(1.0143);">XY</span>
</body></html>
